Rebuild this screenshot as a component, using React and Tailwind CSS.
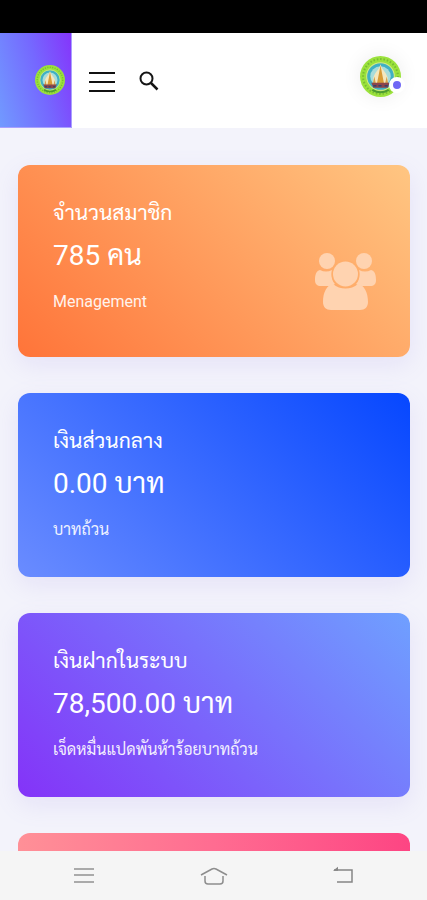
const cards = [
  {
    title: 'จำนวนสมาชิก',
    value: '785 คน',
    note: 'Menagement',
    background: 'bg-[linear-gradient(45deg,#ff7439,#ffc682)]',
    icon: true
  },
  {
    title: 'เงินส่วนกลาง',
    value: '0.00 บาท',
    note: 'บาทถ้วน',
    background: 'bg-[linear-gradient(45deg,#6a8cff,#0647ff)]'
  },
  {
    title: 'เงินฝากในระบบ',
    value: '78,500.00 บาท',
    note: 'เจ็ดหมื่นแปดพันห้าร้อยบาทถ้วน',
    background: 'bg-[linear-gradient(45deg,#8433f8,#6fa0ff)]'
  }
];

function Emblem({ className }) {
  return (
    <svg viewBox="0 0 40 40" className={className} aria-hidden="true">
      <circle cx="20" cy="20" r="20" fill="#9be23c" />
      <circle cx="20" cy="20" r="17" fill="none" stroke="#4f8d2c" strokeWidth="2" strokeDasharray="1.5 1.8" opacity="0.45" />
      <circle cx="20" cy="20" r="13.5" fill="#3fb0c4" stroke="#d5e986" />
      <circle cx="20" cy="20" r="10" fill="#a8dcda" />
      <path d="M20 8c1 5 5 7 7 13v7H13v-7c2-6 6-8 7-13z" fill="#f4e7bd" />
      <path d="M20 9l1.5 8 2 10h-7l2-10z" fill="#d99b36" />
      <path d="M14 20l1.5 7h-3zM26 20l1.5 7h-3z" fill="#d5a14b" />
      <path d="M11 26h18l-2 5H13z" fill="#8b454b" />
      <path d="M13 29h3m2 0h3m3 0h3" stroke="#2d426f" strokeWidth="1.5" />
      <path d="M12 33c5 3 11 3 16 0" fill="none" stroke="#4c9b32" strokeWidth="2" />
    </svg>
  );
}

function MembersIcon() {
  return (
    <svg viewBox="0 0 62 57" className="h-[57px] w-[62px]" fill="#ffd3b0" aria-hidden="true">
      <circle cx="12" cy="8" r="8" />
      <circle cx="49" cy="8" r="8" />
      <path d="M5 17c4 2 8 2 12 0-1 7 0 11 3 14-2 1-4 2-6 2H6c-4 0-6-2-6-6 0-5 1-9 5-10z" />
      <path d="M56 17c-4 2-8 2-12 0 1 7 0 11-3 14 2 1 4 2 6 2h8c4 0 6-2 6-6 0-5-1-9-5-10z" />
      <circle cx="30.5" cy="21" r="14" fill="#ffae6b" />
      <circle cx="30.5" cy="21" r="12.5" />
      <path d="M18 31c7 6 18 6 25 0 6 1 10 8 10 18 0 5-3 8-8 8H16c-5 0-8-3-8-8 0-10 4-17 10-18z" />
    </svg>
  );
}

function StatCard({ card }) {
  return (
    <section className={`flex shrink-0 justify-between rounded-xl pt-[35px] pr-[33px] pb-[35px] pl-[35px] text-white shadow-[0_8px_24px_rgba(150,130,230,0.14)] ${card.background}`}>
      <div>
        <h2 className="text-[21px] leading-[26px]">{card.title}</h2>
        <p className="mt-3 text-[28px] leading-9">{card.value}</p>
        <p className="mt-4 text-base leading-6 opacity-90">{card.note}</p>
      </div>
      {card.icon && (
        <div className="pt-[53px] pb-3">
          <MembersIcon />
        </div>
      )}
    </section>
  );
}

function Header() {
  return (
    <header className="flex h-[95px] shrink-0 items-center bg-white">
      <a href="#home" aria-label="Home" className="flex h-full w-[72px] items-center justify-end border-r border-b border-[#a9a0ff] bg-[linear-gradient(75deg,#719aff,#7568ff_55%,#8535fb)] pr-1.5">
        <Emblem className="size-[30px]" />
      </a>
      <button aria-label="Menu" className="ml-[17px]">
        <svg viewBox="0 0 26 22" className="mt-[3px] h-[22px] w-[26px]" fill="none" stroke="#111" strokeWidth="2" aria-hidden="true">
          <path d="M0 2h26M0 11h26M0 20h26" />
        </svg>
      </button>
      <button aria-label="Search" className="ml-6">
        <svg viewBox="0 0 20 20" className="size-5" fill="none" stroke="#151515" aria-hidden="true">
          <circle cx="7.5" cy="7.5" r="6" strokeWidth="2" />
          <path d="M12 12l6.5 6.5" strokeWidth="2.5" />
        </svg>
      </button>
      <button aria-label="Profile" className="relative mr-[26px] mb-2 ml-auto rounded-full shadow-[0_0_20px_rgba(0,0,0,0.08)]">
        <Emblem className="size-[41px]" />
        <span className="absolute -right-1 bottom-1 size-4 rounded-full border-4 border-white bg-[#7068f5]" />
      </button>
    </header>
  );
}

function SystemNav() {
  return (
    <nav className="flex h-[49px] shrink-0 items-center justify-between bg-[#f5f5f5] px-[72px]">
      <button aria-label="Recent apps">
        <svg viewBox="0 0 24 20" className="h-5 w-6" fill="none" stroke="#aaa" strokeWidth="2" aria-hidden="true">
          <path d="M2 3h20M2 9h20M2 16h20" />
        </svg>
      </button>
      <button aria-label="Home screen">
        <svg viewBox="0 0 28 20" className="h-5 w-7" fill="none" stroke="#8d8d8d" strokeWidth="1.5" aria-hidden="true">
          <path d="M1 9l11-6q2-1 4 0l11 6M5 10v5q0 3 3 3h12q3 0 3-3v-5" />
        </svg>
      </button>
      <button aria-label="Back">
        <svg viewBox="0 0 24 20" className="h-5 w-6" fill="none" stroke="#858585" strokeWidth="1.5" aria-hidden="true">
          <path d="M3 4h18v12H6" />
          <path d="M2 4.7l5-4v4z" fill="#858585" stroke="none" />
        </svg>
      </button>
    </nav>
  );
}

function App() {
  return (
    <div className="flex h-screen flex-col bg-[#f3f3fb] font-[Roboto,Sarabun,'Noto_Sans_Thai_Looped',Loma,Garuda,'Noto_Sans_Thai',sans-serif]">
      <div className="h-[33px] shrink-0 bg-black" />
      <Header />
      <main className="flex min-h-0 flex-1 flex-col gap-9 overflow-hidden pt-[37px] pr-[17px] pl-[18px]">
        {cards.map(card => (
          <StatCard key={card.title} card={card} />
        ))}
        <section className="h-[184px] shrink-0 rounded-xl bg-[linear-gradient(to_right,#ff9097,#ff6c91_50%,#fd4583)]" />
      </main>
      <SystemNav />
    </div>
  );
}

export default App;
